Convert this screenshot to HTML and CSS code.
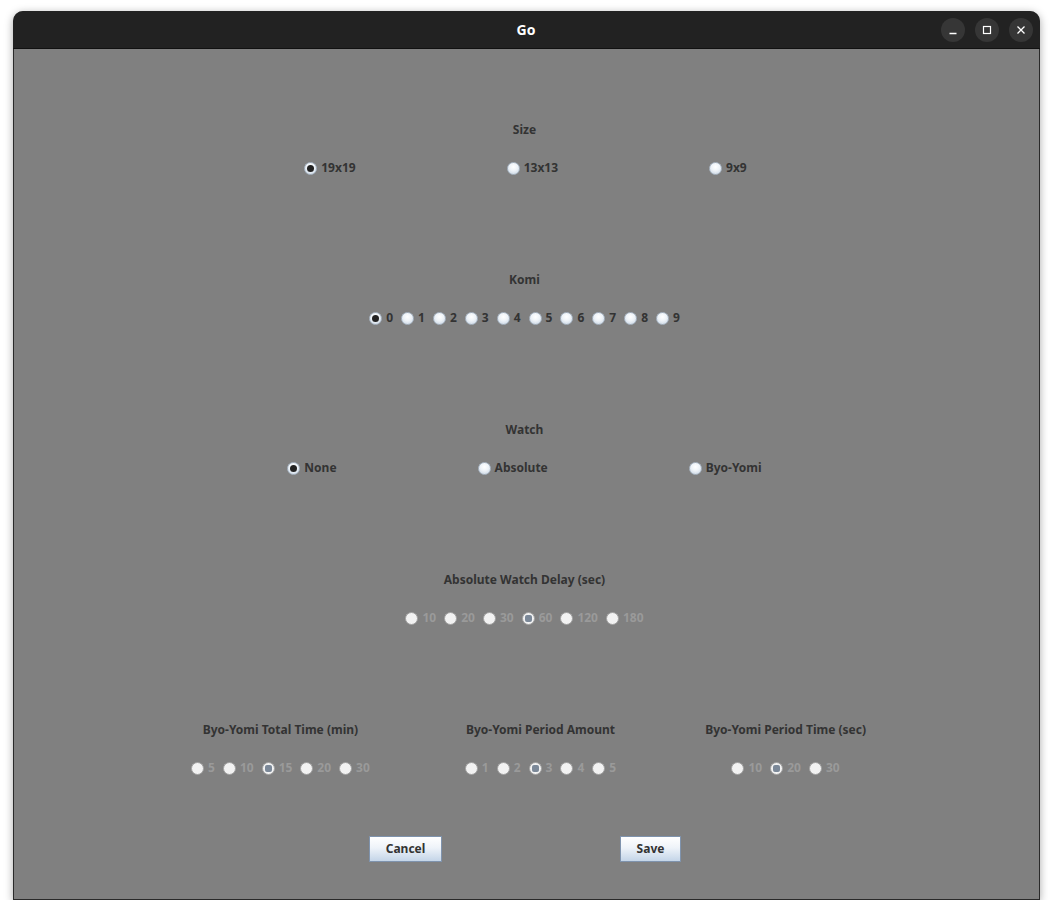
FILE: index.html
```html
<!DOCTYPE html>
<html>
<head>
<meta charset="utf-8">
<link rel="stylesheet" href="styles.css">
</head>
<body>
<div class="window">
  <div class="titlebar">
    <div class="title">Go</div>
    <div class="controls">
      <span class="ctl"><svg width="10" height="10" viewBox="0 0 10 10"><path d="M1.5 8.5h7" stroke="#fff" stroke-width="1.3"/></svg></span>
      <span class="ctl"><svg width="10" height="10" viewBox="0 0 10 10"><rect x="1.5" y="1.5" width="7" height="7" fill="none" stroke="#fff" stroke-width="1.2"/></svg></span>
      <span class="ctl"><svg width="10" height="10" viewBox="0 0 10 10"><path d="M1.5 1.5l7 7M8.5 1.5l-7 7" stroke="#fff" stroke-width="1.3"/></svg></span>
    </div>
  </div>
  <div class="content">
    <section class="sec">
      <div class="head">Size</div>
      <div class="row gap151 nudge">
        <label class="opt"><span class="radio sel"></span>19x19</label>
        <label class="opt"><span class="radio"></span>13x13</label>
        <label class="opt"><span class="radio"></span>9x9</label>
      </div>
    </section>
    <section class="sec">
      <div class="head">Komi</div>
      <div class="row gap8">
        <label class="opt"><span class="radio sel"></span>0</label>
        <label class="opt"><span class="radio"></span>1</label>
        <label class="opt"><span class="radio"></span>2</label>
        <label class="opt"><span class="radio"></span>3</label>
        <label class="opt"><span class="radio"></span>4</label>
        <label class="opt"><span class="radio"></span>5</label>
        <label class="opt"><span class="radio"></span>6</label>
        <label class="opt"><span class="radio"></span>7</label>
        <label class="opt"><span class="radio"></span>8</label>
        <label class="opt"><span class="radio"></span>9</label>
      </div>
    </section>
    <section class="sec">
      <div class="head">Watch</div>
      <div class="row gap141">
        <label class="opt"><span class="radio sel"></span>None</label>
        <label class="opt"><span class="radio"></span>Absolute</label>
        <label class="opt"><span class="radio"></span>Byo-Yomi</label>
      </div>
    </section>
    <section class="sec">
      <div class="head">Absolute Watch Delay (sec)</div>
      <div class="row gap8">
        <label class="opt dis"><span class="radio"></span>10</label>
        <label class="opt dis"><span class="radio"></span>20</label>
        <label class="opt dis"><span class="radio"></span>30</label>
        <label class="opt dis"><span class="radio sel"></span>60</label>
        <label class="opt dis"><span class="radio"></span>120</label>
        <label class="opt dis"><span class="radio"></span>180</label>
      </div>
    </section>
    <section class="sec groups">
      <div class="group g1">
        <div class="head">Byo-Yomi Total Time (min)</div>
        <div class="row gap8">
          <label class="opt dis"><span class="radio"></span>5</label>
          <label class="opt dis"><span class="radio"></span>10</label>
          <label class="opt dis"><span class="radio sel"></span>15</label>
          <label class="opt dis"><span class="radio"></span>20</label>
          <label class="opt dis"><span class="radio"></span>30</label>
        </div>
      </div>
      <div class="group g2">
        <div class="head">Byo-Yomi Period Amount</div>
        <div class="row gap8">
          <label class="opt dis"><span class="radio"></span>1</label>
          <label class="opt dis"><span class="radio"></span>2</label>
          <label class="opt dis"><span class="radio sel"></span>3</label>
          <label class="opt dis"><span class="radio"></span>4</label>
          <label class="opt dis"><span class="radio"></span>5</label>
        </div>
      </div>
      <div class="group g3">
        <div class="head">Byo-Yomi Period Time (sec)</div>
        <div class="row gap8">
          <label class="opt dis"><span class="radio"></span>10</label>
          <label class="opt dis"><span class="radio sel"></span>20</label>
          <label class="opt dis"><span class="radio"></span>30</label>
        </div>
      </div>
    </section>
    <div class="buttons">
      <button class="btn cancel">Cancel</button>
      <button class="btn save">Save</button>
    </div>
  </div>
</div>
</body>
</html>
```
FILE: styles.css
```css
html, body {
  margin: 0;
  padding: 0;
  background: #ffffff;
}
body {
  padding: 11px 0 0 13px;
  font-family: "Noto Sans", "DejaVu Sans", sans-serif;
}
.window {
  width: 1027px;
  height: 889px;
  border-radius: 10px 10px 0 0;
  overflow: hidden;
  box-shadow: 0 2px 8px rgba(0,0,0,0.35);
  display: flex;
  flex-direction: column;
  background: #808080;
}
.titlebar {
  height: 37px;
  background: #222222;
  border-bottom: 1px solid #111;
  display: flex;
  align-items: center;
  justify-content: center;
  position: relative;
  flex: none;
}
.title {
  color: #ffffff;
  font-weight: bold;
  font-size: 14px;
  margin-left: -1px;
}
.controls {
  position: absolute;
  right: 7px;
  top: 7px;
  display: flex;
  gap: 10px;
}
.ctl {
  width: 24px;
  height: 24px;
  border-radius: 50%;
  background: #363636;
  display: flex;
  align-items: center;
  justify-content: center;
}
.content {
  flex: 1;
  border: 1px solid #2a2a2a;
  border-top: none;
  background: #808080;
  padding-top: 73px;
  padding-right: 4px;
  display: flex;
  flex-direction: column;
  align-items: center;
}
.sec {
  display: flex;
  flex-direction: column;
  align-items: center;
  height: 150px;
}
.head, .opt, .btn {
  font-size: 12px;
  font-weight: bold;
  color: #333333;
  line-height: 16px;
}
.head {
  height: 16px;
  margin-bottom: 22px;
}
.row {
  display: flex;
  height: 16px;
  align-items: center;
}
.nudge { margin-left: 2px; }
.gap151 { gap: 151px; }
.gap141 { gap: 141px; }
.gap8 { gap: 8px; }
.opt {
  display: flex;
  align-items: center;
  gap: 4px;
}
.opt.dis { color: #9a9a9a; }
.radio {
  width: 11px;
  height: 11px;
  border-radius: 50%;
  border: 1px solid #a9b6c4;
  background: radial-gradient(circle at 50% 35%, #ffffff 0%, #eef3f8 45%, #c3d1e0 100%);
  box-sizing: content-box;
  position: relative;
  flex: none;
}
.radio.sel::after {
  content: "";
  position: absolute;
  left: 2px;
  top: 2px;
  width: 7px;
  height: 7px;
  border-radius: 50%;
  background: #222222;
}
.dis .radio {
  background: #f2f2f2;
  border-color: #a0a0a0;
}
.dis .radio.sel::after {
  background: #7b8898;
  border-radius: 2px;
}
.groups {
  flex-direction: row;
  align-items: flex-start;
  height: 114px;
  padding-left: 8px;
}
.group {
  display: flex;
  flex-direction: column;
  align-items: center;
}
.g2 { margin-left: 95px; }
.g3 { margin-left: 89px; }
.buttons {
  display: flex;
  gap: 178px;
  margin-left: 1px;
}
.btn {
  height: 26px;
  border: 1px solid #7f93ad;
  background: linear-gradient(#ffffff 0%, #eef3f9 45%, #c4d5e8 100%);
  padding: 0;
  font-family: "Noto Sans", "DejaVu Sans", sans-serif;
}
.cancel { width: 73px; }
.save { width: 61px; }
```
